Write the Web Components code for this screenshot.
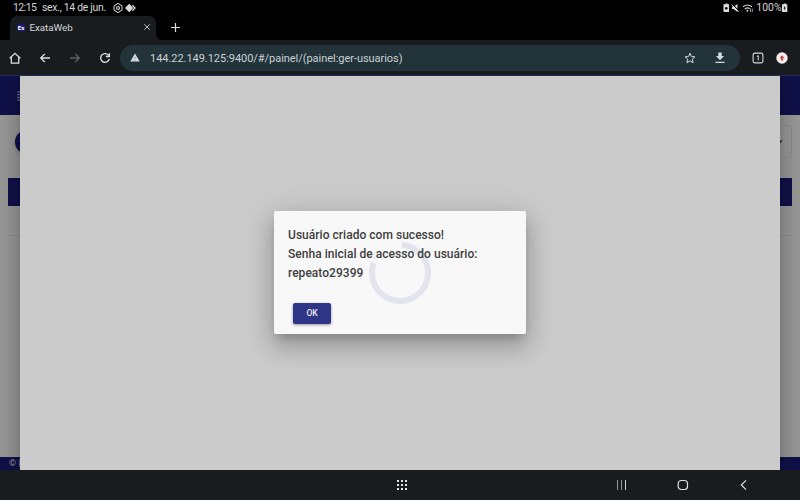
<!DOCTYPE html>
<html lang="pt-BR">
<head>
<meta charset="utf-8">
<title>ExataWeb</title>
<style>
html,body{margin:0;width:800px;height:500px;overflow:hidden;background:#000;font-family:Roboto,"Liberation Sans",sans-serif}
</style>
</head>
<body>
<tablet-screen></tablet-screen>
<script>
const define = (name, html) => customElements.define(name, class extends HTMLElement {
  constructor() {
    super();
    const t = document.createElement('template');
    t.innerHTML = html;
    this.attachShadow({ mode: 'open' }).append(t.content.cloneNode(true));
  }
});

define('status-bar', `
<style>
:host{display:flex;height:16px;padding:0 12px 0 13px;align-items:center;background:#000;color:#d6d6d6;font-size:10.4px;line-height:16px;white-space:pre}
.time{width:22px;letter-spacing:-.5px}
.date{width:64px;margin-left:7px;letter-spacing:-.27px}
.gear{margin-left:7px}
.dia{margin-left:2px}
.right{margin-left:auto;display:flex;align-items:center}
svg{display:block;flex:none}
</style>
<span class="time">12:15</span><span class="date">sex., 14 de jun.</span>
<svg class="gear" width="10" height="10" viewBox="0 0 10 10" fill="none" stroke="#d6d6d6"><path d="M3.8.7h2.4l.6 1.2 1.4.1 1.1 2-.8 1 .8 1-1.1 2-1.4.1-.6 1.2H3.8L3.200 8.100 1.800 8 .7 6l.8-1-.8-1 1.100-2 1.400-.1z"/><circle cx="5" cy="5" r="1.500" stroke-width="1.200"/></svg>
<svg class="dia" width="11" height="10" viewBox="0 0 11 10"><path d="M4.200.8 8.200 5 4.200 9.200 0 5z" fill="#ddd"/><path d="M7.300 2.300 10 5 7.300 7.700" fill="none" stroke="#ddd" stroke-width="1.300"/></svg>
<div class="right">
<svg width="33" height="12" viewBox="0 0 33 12"><path d="M1.500 2.300h1V1.500h2v.8h1.500v7.700H.5V2.300z" fill="#ddd"/><circle cx="3.300" cy="6.200" r="1.300" fill="#000"/>
<path d="M9 4.800h1.600L14.500 2v8l-3.900-3.100H9z" fill="#ddd"/><path d="M9.300 2.300l6.500 6.500" stroke="#000" stroke-width="1.200"/><path d="M8.700 2.700l7 7" stroke="#ddd"/>
<path d="M20 4.700q4.500-3.400 9 0M21.800 6.900q2.800-2 5 0" fill="none" stroke="#ccc" stroke-width="1.200"/><circle cx="24.400" cy="8.700" r="1" fill="#ccc"/><path d="M27.500 6.500v3.500M29.300 6.500v3.500" stroke="#bbb" stroke-width=".8"/></svg>
<span>100%</span>
<svg style="margin-left:-.5px" width="7" height="12" viewBox="0 0 7 12"><path d="M2 2.300h.8V1.500h2v.8h1.500v7.700H1V2.300z" fill="#ddd"/><path d="M4 3.800 2.500 6.500h1L3.300 8.500l1.600-2.800H3.900z" fill="#000"/></svg>
</div>`);

define('tab-strip', `
<style>
:host{display:flex;height:24px;padding-left:10px;background:#000;color:#d4d6d7;align-items:stretch}
.tab{box-sizing:border-box;width:146px;background:#191c1f;border-radius:7px 7px 0 0;display:flex;align-items:center;padding:0 5px 2px 6.500px;font-size:9.800px;letter-spacing:-.05px}
.fav{width:9px;height:9px;border-radius:50%;background:#1b1b6b;color:#fff;font-size:6px;font-weight:700;line-height:9px;text-align:center;margin-right:4px}
.x{margin-left:auto}
.plus{margin:6px 0 0 9px}
.foot{width:5px;background:radial-gradient(circle at 100% 0,#000 4.500px,#191c1f 5px) 0 100%/5px 5px no-repeat}
</style>
<div class="tab"><span class="fav">Ex</span><span>ExataWeb</span><svg class="x" width="8" height="8" viewBox="0 0 8 8"><path d="M1.200 1.200l5.600 5.600M6.800 1.200 1.200 6.800" stroke="#b4b6b8"/></svg></div><i class="foot"></i>
<svg class="plus" width="10" height="10" viewBox="0 0 10 10"><path d="M5.500 1v9M1 5.500h9" stroke="#ddd" stroke-width="1.200"/></svg>`);

define('address-bar', `
<style>
:host{display:flex;flex:none;box-sizing:border-box;width:620px;height:26px;border-radius:13px;background:#22333a;align-items:center;padding:0 14px 0 10px;color:#c9d1d4;font-size:11px;letter-spacing:-.04px}
.url{margin-left:10px;padding-top:1px;white-space:nowrap}
.star{margin-left:auto;margin-right:18px}
</style>
<svg width="10" height="9" viewBox="0 0 10 9"><path d="M5 .5 9.700 8.500H.3z" fill="#d6dcde"/><path d="M5 3.700v2.100M5 6.700v.8" stroke="#8c989c"/></svg>
<span class="url"><slot></slot></span>
<svg class="star" width="12" height="12" viewBox="0 0 24 24"><path d="M12 2.500l2.900 6.600 7 .6-5.300 4.700 1.600 7L12 17.700l-6.200 3.700 1.600-7L2.100 9.700l7-.6z" fill="none" stroke="#d6dcde" stroke-width="2"/></svg>
<svg width="12" height="12" viewBox="0 0 12 12" fill="#d6dcde"><path d="M4.300.5h3.400V4H10L6 8.200 2 4h2.300zM1.500 9.700h9V11h-9z"/></svg>`);

define('browser-toolbar', `
<style>
:host{display:flex;height:35px;background:#191c1f;align-items:center;padding-left:9px;box-sizing:border-box}
svg{flex:none;display:block}
.tabs{margin-left:11.500px}.ext{margin-left:12.500px}
</style>
<svg width="111" height="14" viewBox="0 0 111 14" fill="none" stroke="#dcdfe0" stroke-width="1.300">
<path d="M.7 7.200 6 2.300l5.300 4.900M2.300 6v6.200h7.400V6" stroke-width="1.300"/>
<path d="M41 7h-9M35.800 3 31.700 7l4.100 4"/>
<path d="M61 7h9M66.200 3l4.100 4-4.100 4" stroke="#5d6062"/>
<path d="M99.700 4.500A4.400 4.400 0 1 0 100.300 8M100.400 2.300v3.200h-3.500"/></svg>
<address-bar>144.22.149.125:9400/#/painel/(painel:ger-usuarios)</address-bar>
<svg class="tabs" width="12" height="12" viewBox="0 0 12 12"><rect x="1.100" y="1.100" width="9.800" height="9.800" rx="1.800" fill="none" stroke="#d6d8da" stroke-width="1.100"/><path d="M4.800 4.500l1.500-.8v4.800" fill="none" stroke="#d6d8da"/></svg>
<svg class="ext" width="12" height="12" viewBox="0 0 12 12"><circle cx="6" cy="6" r="5.700" fill="#f6eeee"/><path d="M6 3.200 8.500 6H7.100v2.500H4.900V6H3.500z" fill="#c8474a"/></svg>`);

define('app-page', `
<style>
:host{display:flex;flex-direction:column;height:100%;background:#999;color:#999}
header{height:39px;border-top:1px solid #252a5d;background:#11114a;display:flex;align-items:center;padding-left:16.500px}
header svg{display:block}
main{flex:1;display:flex;flex-direction:column;padding:0 8px 0 7.500px}
.tools{display:flex;justify-content:space-between;padding:10px 0 0 7px}
.round{width:24px;height:24px;border-radius:50%;background:#10104a;margin-top:5px;box-shadow:0 1px 4px #0003}
.select{box-sizing:border-box;width:70px;height:33px;border:1px solid #8e8e8e;border-radius:3px;display:flex;justify-content:flex-end;align-items:center;padding-right:8px}
.bar{height:28px;background:#11114a;margin-top:20px}
hr{width:100%;border:0;height:1px;background:#8d8d8d;margin:29px 0 0}
footer{height:13px;background:#11114a;font-size:9px;line-height:12px;padding-left:9px}
</style>
<header><svg width="14" height="12" viewBox="0 0 14 12"><path d="M0 2h14M0 4.700h14M0 7.300h14M0 10h14" stroke="#7a7a96"/></svg></header>
<main><div class="tools"><div class="round"></div><div class="select"><svg width="6" height="4" viewBox="0 0 6 4"><path d="M0 .5h6L3 3.500z" fill="#333"/></svg></div></div><div class="bar"></div><hr></main>
<footer>© <slot></slot></footer>`);

define('loading-ring', `
<style>:host{display:block}</style>
<svg width="64" height="64" viewBox="0 0 64 64"><path d="M34 4A28 28 0 1 1 5.800 22" fill="none" stroke="#e3e3ed" stroke-width="6"/></svg>`);

define('message-dialog', `
<style>
:host{display:block;position:relative;box-sizing:border-box;width:252px;height:123px;padding:15px 14px 14px;margin-bottom:2px;background:#f8f8f8;border-radius:2px;box-shadow:0 7px 9px -4px #0003,0 14px 22px 2px #00000024,0 5px 28px 5px #0000001f;color:#404040;font-size:12px;font-weight:500;line-height:19.300px;letter-spacing:.03px}
loading-ring{position:absolute;left:94px;top:30px}
.message{position:relative}
button{display:block;position:relative;width:38px;height:21px;margin:20px 0 0 5px;padding:0;border:0;border-radius:2px;background:#303687;color:#eee;font:500 8.500px/21px Roboto,sans-serif;box-shadow:0 1px 3px #0006}
</style>
<loading-ring></loading-ring><div class="message"><slot></slot></div><button>OK</button>`);

define('modal-layer', `
<style>
:host{display:flex;width:760px;height:100%;background:#cbcbcb;align-items:center;justify-content:center;box-shadow:0 7px 9px -4px #0003,0 14px 22px 2px #00000024,0 5px 28px 5px #0000001f}
</style><slot></slot>`);

define('android-nav', `
<style>
:host{display:flex;height:30px;box-sizing:border-box;background:#191c1f;align-items:center;padding:0 50px 0 397px;justify-content:space-between}
.keys{display:flex;align-items:center}
.keys svg+svg{margin-left:49px}
svg{display:block}
</style>
<svg width="11" height="11" viewBox="0 0 11 11" fill="#e5e5e5"><path d="M0 0h2v2H0zm4 0h2v2H4zm4 0h2v2H8zM0 4h2v2H0zm4 0h2v2H4zm4 0h2v2H8zM0 8h2v2H0zm4 0h2v2H4zm4 0h2v2H8z"/></svg>
<div class="keys">
<svg width="12" height="12" viewBox="0 0 12 12"><path d="M1.500 1v10M5.500 1v10" stroke="#999"/><path d="M9.500 1v10" stroke="#ccc"/></svg>
<svg width="12" height="12" viewBox="0 0 12 12"><rect x="1.200" y="1.500" width="9.300" height="9" rx="3" fill="none" stroke="#e0e0e0" stroke-width="1.200"/></svg>
<svg width="12" height="12" viewBox="0 0 12 12"><path d="M8 1.300 3.300 6 8 10.700" fill="none" stroke="#e0e0e0" stroke-width="1.200"/></svg>
</div>`);

define('tablet-screen', `
<style>
:host{display:flex;flex-direction:column;width:800px;height:500px}
.view{height:395px;position:relative;overflow:hidden}
modal-layer{position:absolute;left:20px;top:1px;height:394px}
</style>
<status-bar></status-bar><tab-strip></tab-strip><browser-toolbar></browser-toolbar>
<div class="view"><app-page>|</app-page><modal-layer><message-dialog>Usuário criado com sucesso!<br>Senha inicial de acesso do usuário:<br>repeato29399</message-dialog></modal-layer></div>
<android-nav></android-nav>`);
</script>
</body>
</html>
